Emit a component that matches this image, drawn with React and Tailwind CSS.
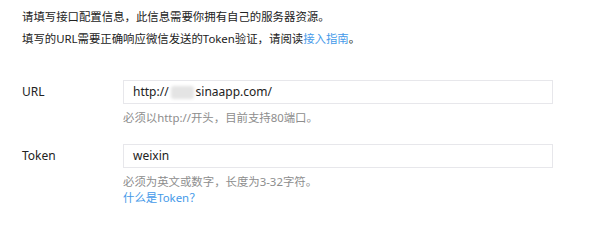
import React from "react";

const font = { fontFamily: '"Noto Sans", "Noto Sans CJK SC", sans-serif' };

function Field({ label, children, hint, extra }) {
  return (
    <div className="flex">
      <div className="w-[101px] leading-[24px] text-[12px] text-[#222]">{label}</div>
      <div>
        <div className="w-[430px] h-[24px] border border-[#e7e7eb] bg-white px-[9px] flex items-center text-[12px] text-[#222]">
          {children}
        </div>
        <p className="mt-[6px] leading-[16px] text-[11.4px] text-[#8d8d8d]">{hint}</p>
        {extra}
      </div>
    </div>
  );
}

export default function App() {
  return (
    <div
      className="w-[600px] h-[222px] bg-white pl-[22px] pt-[6px] overflow-hidden"
      style={font}
    >
      <div className="text-[11.4px] leading-[22px] text-[#222]">
        <p>请填写接口配置信息，此信息需要你拥有自己的服务器资源。</p>
        <p>
          填写的URL需要正确响应微信发送的Token验证，请阅读
          <a href="#" className="text-[#459ae9]">
            接入指南
          </a>
          。
        </p>
      </div>

      <div className="mt-[30px]">
        <Field
          label="URL"
          hint="必须以http://开头，目前支持80端口。"
        >
          <span>http://</span>
          <span className="inline-block w-[23px] h-[13px] mx-[2px] rounded-[3px] bg-[#e4e4e4] blur-[1.5px]" />
          <span>sinaapp.com/</span>
        </Field>
      </div>

      <div className="mt-[18px]">
        <Field
          label="Token"
          hint="必须为英文或数字，长度为3-32字符。"
          extra={
            <a href="#" className="block leading-[16px] text-[11.4px] text-[#459ae9]">
              什么是Token？
            </a>
          }
        >
          <span>weixin</span>
        </Field>
      </div>
    </div>
  );
}
